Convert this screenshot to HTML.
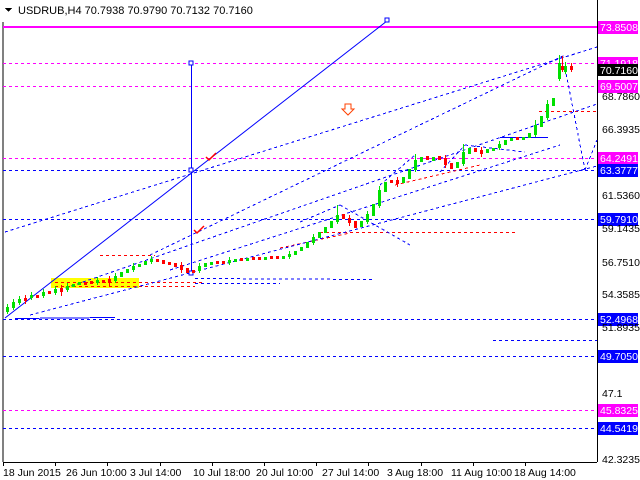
<!DOCTYPE html>
<html><head><meta charset="utf-8"><style>
html,body{margin:0;padding:0;background:#fff;}
svg{display:block;font-family:"Liberation Sans",sans-serif;}
</style></head><body>
<svg width="640" height="480" viewBox="0 0 640 480" xmlns="http://www.w3.org/2000/svg" shape-rendering="crispEdges">
<rect width="640" height="480" fill="#fff"/>
<path d="M5 8 L12 8 L8.5 12 Z" fill="#000"/>
<text x="18" y="14" font-size="11" fill="#000">USDRUB,H4  70.7938 70.9790 70.7132 70.7160</text>
<line x1="3" y1="22" x2="3" y2="462" stroke="#000"/>
<line x1="597.5" y1="0" x2="597.5" y2="462" stroke="#000"/>
<line x1="3" y1="462.5" x2="597" y2="462.5" stroke="#000"/>
<rect x="51" y="278" width="88" height="10" fill="#ffff00"/>
<line x1="3" y1="27" x2="597" y2="27" stroke="#ff00ff" stroke-width="2"/>
<g stroke-dasharray="3,3" stroke-width="1">
<line x1="3" y1="63.5" x2="597" y2="63.5" stroke="#ff00ff"/>
<line x1="3" y1="86.5" x2="597" y2="86.5" stroke="#ff00ff"/>
<line x1="3" y1="158.5" x2="597" y2="158.5" stroke="#ff00ff"/>
<line x1="3" y1="410.5" x2="597" y2="410.5" stroke="#ff00ff"/>
<line x1="3" y1="170.5" x2="597" y2="170.5" stroke="#0000ff"/>
<line x1="3" y1="219.5" x2="597" y2="219.5" stroke="#0000ff"/>
<line x1="3" y1="319.5" x2="597" y2="319.5" stroke="#0000ff"/>
<line x1="3" y1="356.5" x2="597" y2="356.5" stroke="#0000ff"/>
<line x1="3" y1="428.5" x2="597" y2="428.5" stroke="#0000ff"/>
<line x1="493" y1="340.5" x2="597" y2="340.5" stroke="#0000ff"/>
<line x1="195" y1="283.5" x2="280" y2="283.5" stroke="#0000ff"/>
<line x1="195" y1="278.5" x2="375" y2="279.5" stroke="#0000ff"/>
<line x1="539" y1="111.5" x2="597" y2="111.5" stroke="#ff0000"/>
<line x1="320" y1="232.5" x2="515" y2="232.5" stroke="#ff0000"/>
<line x1="100" y1="255.5" x2="155" y2="255.5" stroke="#ff0000"/>
<line x1="55" y1="282.5" x2="205" y2="282.5" stroke="#ff0000"/>
<line x1="55" y1="286.5" x2="195" y2="286.5" stroke="#ff0000"/>
<line x1="395" y1="185" x2="480" y2="165" stroke="#ff0000"/>
<line x1="280" y1="248" x2="350" y2="233" stroke="#ff0000"/>
<line x1="5" y1="232" x2="597" y2="47" stroke="#0000ff"/>
<line x1="60" y1="290" x2="597" y2="104" stroke="#0000ff"/>
<line x1="30" y1="315" x2="597" y2="166" stroke="#0000ff"/>
<line x1="170" y1="270" x2="560" y2="145" stroke="#0000ff"/>
<line x1="150" y1="255" x2="565" y2="55" stroke="#0000ff"/>
<line x1="560" y1="58" x2="572" y2="55" stroke="#0000ff"/>
<line x1="565" y1="68" x2="585" y2="170" stroke="#0000ff"/>
<line x1="585" y1="170" x2="597" y2="140" stroke="#0000ff"/>
<line x1="300" y1="222" x2="340" y2="205" stroke="#0000ff"/>
<line x1="340" y1="205" x2="410" y2="245" stroke="#0000ff"/>
<line x1="380" y1="185" x2="415" y2="155" stroke="#0000ff"/>
<line x1="440" y1="172" x2="465" y2="145" stroke="#0000ff"/>
<line x1="465" y1="145" x2="525" y2="152" stroke="#0000ff"/>
</g>
<line x1="5" y1="318" x2="387" y2="21" stroke="#0000ff" shape-rendering="auto"/>
<line x1="15" y1="318.5" x2="115" y2="317.5" stroke="#0000ff"/>
<line x1="500" y1="137.5" x2="548" y2="137.5" stroke="#0000ff"/>
<line x1="191.5" y1="63" x2="191.5" y2="273" stroke="#0000ff"/>
<g fill="#fff" stroke="#0000ff">
<rect x="385" y="18" width="4" height="4"/>
<rect x="189" y="61" width="4" height="4"/>
<rect x="189" y="168" width="4" height="4"/>
<rect x="189" y="271" width="4" height="4"/>
</g>
<path d="M206 157 l3 3 l7 -7" stroke="#ff0000" stroke-width="1.5" fill="none" shape-rendering="auto"/>
<path d="M194 230 l3 3 l7 -7" stroke="#ff0000" stroke-width="1.5" fill="none" shape-rendering="auto"/>
<path d="M345 104 h6 v5 h3 l-6 6 l-6 -6 h3 z" stroke="#ff4000" fill="#fff" shape-rendering="auto"/>
<!-- green candles -->
<path stroke="#00e000" stroke-width="3" fill="none" d="M7.5 312V307M13.5 308V302M19.5 303V299M31.5 298V295M43.5 296V292M55.5 293V289M67.5 290V286M73.5 287V284M79.5 285V282M97.5 283V280M115.5 281V276M121.5 277V272M127.5 273V269M133.5 270V266M139.5 267V264M145.5 265V261M151.5 262V259M199.5 271V266M205.5 267V263M211.5 265V262M229.5 263V260M235.5 262V259M247.5 261V258M265.5 260V257M283.5 259V256M289.5 257V254M295.5 255V251M301.5 251V247M307.5 248V242M313.5 243V237M319.5 238V232M325.5 233V227M331.5 228V221M337.5 222V215M361.5 227V221M367.5 222V214M373.5 216V204M379.5 206V190M385.5 192V182M403.5 183V177M409.5 179V169M415.5 170V160M421.5 162V157M433.5 161V157M457.5 168V162M463.5 164V152M469.5 154V148M487.5 153V149M493.5 151V148M499.5 148V144M505.5 145V140M511.5 141V138M523.5 140V137M529.5 138V133M535.5 135V125M541.5 127V116M547.5 118V104M553.5 106V98M559.5 79V63M565.5 72V66"/>
<path stroke="#00e000" stroke-width="1" fill="none" d="M7.5 314V304M13.5 310V299M19.5 305V296M31.5 300V292M43.5 298V289M55.5 295V286M67.5 292V283M97.5 285V277M115.5 283V273M133.5 272V263M151.5 264V256M199.5 273V263M229.5 265V257M289.5 259V251M313.5 245V234M337.5 224V205M367.5 224V211M379.5 208V186M415.5 172V154M463.5 166V144M499.5 150V141M535.5 137V120M547.5 120V100M559.5 81V55M565.5 74V62"/>
<!-- red candles -->
<path stroke="#ff0000" stroke-width="3" fill="none" d="M25.5 298V301M37.5 295V298M49.5 291V294M61.5 288V292M85.5 282V285M91.5 281V284M103.5 280V283M109.5 279V283M157.5 259V262M163.5 260V264M169.5 262V265M175.5 263V267M181.5 265V270M187.5 268V273M193.5 270V273M217.5 261V264M223.5 261V264M241.5 258V261M253.5 257V260M259.5 257V260M271.5 256V259M277.5 256V259M343.5 214V219M349.5 218V223M355.5 221V228M391.5 180V183M397.5 180V184M427.5 156V160M439.5 156V160M445.5 158V165M451.5 163V169M475.5 148V152M481.5 150V154M517.5 137V140M562.5 66V70M571.5 66V70"/>
<path stroke="#ff0000" stroke-width="1" fill="none" d="M25.5 295V304M61.5 285V296M109.5 276V286M181.5 262V273M349.5 215V226M397.5 177V187M445.5 155V168M481.5 147V157M562.5 56V72M571.5 63V72"/>
<g font-size="10.5">
<rect x="598" y="21" width="40" height="13" fill="#ff00ff"/><text x="600" y="31" fill="#fff">73.8508</text>
<rect x="598" y="57" width="40" height="13" fill="#ff00ff"/><text x="600" y="67" fill="#fff">71.1918</text>
<rect x="598" y="64" width="40" height="12" fill="#000"/><text x="600" y="74" fill="#fff">70.7160</text>
<rect x="598" y="80" width="40" height="13" fill="#ff00ff"/><text x="600" y="90" fill="#fff">69.5007</text>
<text x="602" y="100" fill="#000">68.7860</text>
<text x="602" y="133" fill="#000">66.3935</text>
<rect x="598" y="152" width="40" height="13" fill="#ff00ff"/><text x="600" y="162" fill="#fff">64.2491</text>
<rect x="598" y="164" width="40" height="13" fill="#0000ff"/><text x="600" y="174" fill="#fff">63.3777</text>
<text x="602" y="199" fill="#000">61.5360</text>
<rect x="598" y="213" width="40" height="13" fill="#0000ff"/><text x="600" y="223" fill="#fff">59.7910</text>
<text x="602" y="232" fill="#000">59.1435</text>
<text x="602" y="266" fill="#000">56.7510</text>
<text x="602" y="298" fill="#000">54.3585</text>
<rect x="598" y="313" width="40" height="13" fill="#0000ff"/><text x="600" y="323" fill="#fff">52.4968</text>
<text x="602" y="331" fill="#000">51.8935</text>
<rect x="598" y="350" width="40" height="13" fill="#0000ff"/><text x="600" y="360" fill="#fff">49.7050</text>
<text x="602" y="397" fill="#000">47.1</text>
<rect x="598" y="404" width="40" height="13" fill="#ff00ff"/><text x="600" y="414" fill="#fff">45.8325</text>
<rect x="598" y="422" width="40" height="13" fill="#0000ff"/><text x="600" y="432" fill="#fff">44.5419</text>
<text x="602" y="463" fill="#000">42.3235</text>
</g>
<g stroke="#000">
<line x1="3.5" y1="462" x2="3.5" y2="466"/><line x1="55.5" y1="462" x2="55.5" y2="466"/>
<line x1="107.5" y1="462" x2="107.5" y2="466"/><line x1="160.5" y1="462" x2="160.5" y2="466"/>
<line x1="212.5" y1="462" x2="212.5" y2="466"/><line x1="264.5" y1="462" x2="264.5" y2="466"/>
<line x1="316.5" y1="462" x2="316.5" y2="466"/><line x1="368.5" y1="462" x2="368.5" y2="466"/>
<line x1="421.5" y1="462" x2="421.5" y2="466"/><line x1="473.5" y1="462" x2="473.5" y2="466"/>
<line x1="525.5" y1="462" x2="525.5" y2="466"/>
</g>
<g font-size="10.5" fill="#000">
<text x="3" y="476">18 Jun 2015</text>
<text x="66" y="476">26 Jun 10:00</text>
<text x="130" y="476">3 Jul 14:00</text>
<text x="193" y="476">10 Jul 18:00</text>
<text x="256" y="476">20 Jul 10:00</text>
<text x="322" y="476">27 Jul 14:00</text>
<text x="387" y="476">3 Aug 18:00</text>
<text x="451" y="476">11 Aug 10:00</text>
<text x="514" y="476">18 Aug 14:00</text>
</g>
</svg>
</body></html>
